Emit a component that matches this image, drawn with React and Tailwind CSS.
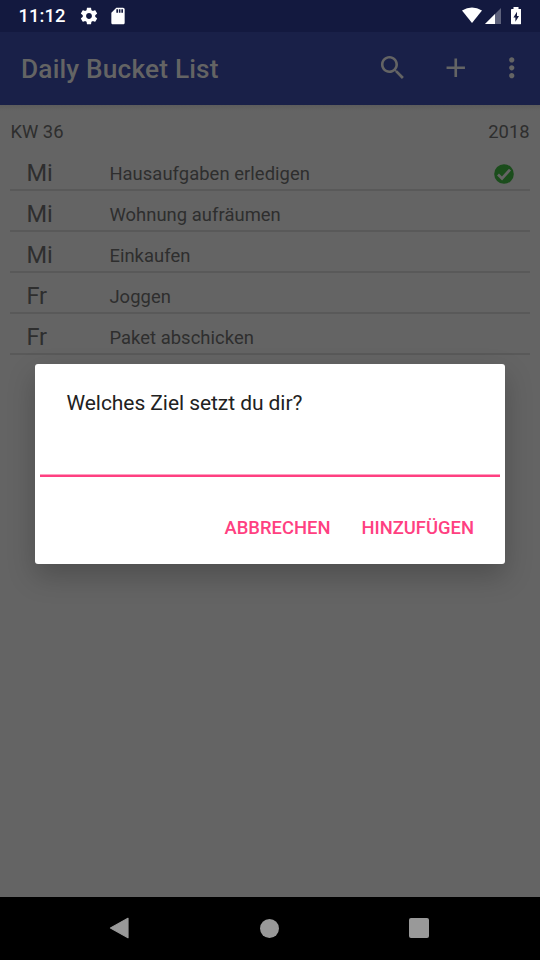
import React from "react";

const goals = [
  { day: "Mi", text: "Hausaufgaben erledigen", done: true },
  { day: "Mi", text: "Wohnung aufräumen" },
  { day: "Mi", text: "Einkaufen" },
  { day: "Fr", text: "Joggen" },
  { day: "Fr", text: "Paket abschicken" },
];

function Icon({ d, className }) {
  return (
    <svg viewBox="0 0 24 24" fill="currentColor" className={className}>
      <path d={d} />
    </svg>
  );
}

const paths = {
  gear: "M19.43 12.98c.04-.32.07-.64.07-.98s-.03-.66-.07-.98l2.11-1.65c.19-.15.24-.42.12-.64l-2-3.46c-.12-.22-.39-.3-.61-.22l-2.49 1c-.52-.4-1.08-.73-1.69-.98l-.38-2.65C14.46 2.18 14.25 2 14 2h-4c-.25 0-.46.18-.49.42l-.38 2.65c-.61.25-1.17.59-1.69.98l-2.49-1c-.23-.09-.49 0-.61.22l-2 3.46c-.13.22-.07.49.12.64l2.11 1.65c-.04.32-.07.65-.07.98s.03.66.07.98l-2.11 1.65c-.19.15-.24.42-.12.64l2 3.46c.12.22.39.3.61.22l2.49-1c.52.4 1.08.73 1.69.98l.38 2.65c.03.24.24.42.49.42h4c.25 0 .46-.18.49-.42l.38-2.65c.61-.25 1.17-.59 1.69-.98l2.49 1c.23.09.49 0 .61-.22l2-3.46c.12-.22.07-.49-.12-.64l-2.11-1.65zM12 15.5c-1.93 0-3.5-1.57-3.5-3.5s1.57-3.5 3.5-3.5 3.5 1.57 3.5 3.5-1.57 3.5-3.5 3.5z",
  sd: "M18 2h-8L4.02 8 4 20c0 1.1.9 2 2 2h12c1.1 0 2-.9 2-2V4c0-1.1-.9-2-2-2zm-6 6h-2V4h2v4zm3 0h-2V4h2v4zm3 0h-2V4h2v4z",
  search: "M15.5 14h-.79l-.28-.27C15.41 12.59 16 11.11 16 9.5 16 5.91 13.09 3 9.5 3S3 5.91 3 9.5 5.91 16 9.5 16c1.61 0 3.09-.59 4.23-1.57l.27.28v.79l5 4.99L20.49 19l-4.99-5zm-6 0C7.01 14 5 11.99 5 9.5S7.01 5 9.5 5 14 7.01 14 9.5 11.99 14 9.5 14z",
  plus: "M19 13h-6v6h-2v-6H5v-2h6V5h2v6h6v2z",
  more: "M12 8c1.1 0 2-.9 2-2s-.9-2-2-2-2 .9-2 2 .9 2 2 2zm0 2c-1.1 0-2 .9-2 2s.9 2 2 2 2-.9 2-2-.9-2-2-2zm0 6c-1.1 0-2 .9-2 2s.9 2 2 2 2-.9 2-2-.9-2-2-2z",
};

function StatusBar() {
  return (
    <div className="flex h-[31.5px] shrink-0 items-center bg-[#13193f] pl-[18.5px] pr-[19px] text-white">
      <span className="mt-px w-[47px] text-[18.4px] font-medium leading-none tracking-[0.1px]">11:12</span>
      <Icon d={paths.gear} className="ml-[13px] size-[20px]" />
      <Icon d={paths.sd} className="ml-[9.5px] size-[20px]" />
      <svg viewBox="0 0 60 18" className="ml-auto h-[18px] w-[60px]" fill="white">
        <path d="M1 3.6Q11 -2.4 21 3.6L11 16Z" />
        <path d="M40 1v16H24z" opacity="0.32" />
        <path d="M34 7v10H24z" />
        <path
          fillRule="evenodd"
          d="M52.5 0h5v2h2q.8 0 .8.8v13.6q0 .8-.8.8h-8.7q-.8 0-.8-.8V2.8q0-.8.8-.8h1.7zM56 4.8l-3.6 5.7h2v4.3l3.6-5.8h-2z"
        />
      </svg>
    </div>
  );
}

function AppBar() {
  return (
    <div className="flex h-[73.5px] shrink-0 items-center bg-[#192048] pl-[21px] pr-[13px] text-[#646464]">
      <h1 className="mt-[2px] text-[26.25px] font-medium leading-none tracking-[0.17px]">Daily Bucket List</h1>
      <Icon d={paths.search} className="-mt-px ml-auto size-[31.5px]" />
      <Icon d={paths.plus} className="-mt-px ml-[32px] size-[31.5px]" />
      <Icon d={paths.more} className="-mt-px ml-[24px] size-[31.5px]" />
    </div>
  );
}

function GoalRow({ goal }) {
  return (
    <li className="flex h-[41px] items-center border-b-2 border-[#595959] pl-[16px] pr-[15.5px]">
      <span className="mt-[9px] w-[83px] text-[23.6px] leading-none tracking-[-0.1px]">{goal.day}</span>
      <span className="mt-[10px] text-[18.4px] leading-none tracking-[0.05px]">{goal.text}</span>
      {goal.done && (
        <svg viewBox="0 0 20 20" className="ml-auto mt-[9px] size-[20px]">
          <circle cx="10" cy="10" r="9.8" fill="#1b4d1c" />
          <path d="M4 10.5l4 3.9 8-8.8" fill="none" stroke="#646464" strokeWidth="2.8" />
        </svg>
      )}
    </li>
  );
}

function Dialog() {
  return (
    <div className="absolute left-[35px] top-[364px] flex h-[200px] w-[470px] flex-col rounded-[3px] bg-white px-[5px] shadow-[0_12px_28px_rgba(0,0,0,0.22)]">
      <p className="ml-[26.5px] mt-[28px] text-[21px] leading-[22px] tracking-[-0.06px] text-[#212121]">Welches Ziel setzt du dir?</p>
      <input
        aria-label="Welches Ziel setzt du dir?"
        className="mt-[20px] h-[40px] w-full outline-none"
      />
      <div className="h-[3px] shrink-0 border-t border-[#ff9fc0] bg-[#ff4081]" />
      <div className="mt-[40px] flex justify-end gap-[31px] pr-[26px] text-[18.4px] font-medium leading-[22px] text-[#ff4081]">
        <button>ABBRECHEN</button>
        <button>HINZUFÜGEN</button>
      </div>
    </div>
  );
}

function NavBar() {
  return (
    <div className="flex h-[63px] shrink-0 items-center justify-between bg-black pb-px pl-[109px] pr-[111px]">
      <svg viewBox="0 0 20 22" className="h-[22px] w-[20px]">
        <path d="M1.5 11L19 1.3v19.4z" fill="#999" stroke="#999" strokeWidth="1.2" strokeLinejoin="round" />
      </svg>
      <div className="ml-[1px] size-[19px] rounded-full bg-[#999]" />
      <div className="size-[20px] rounded-[2px] bg-[#999]" />
    </div>
  );
}

export default function App() {
  return (
    <div className="relative flex h-[960px] w-[540px] flex-col overflow-hidden bg-[#646464] font-[Roboto,sans-serif] text-[#2e2e2e]">
      <StatusBar />
      <AppBar />
      <main className="flex-1 bg-[linear-gradient(#5c5c5c,#646464_6px)] px-[10.4px]">
        <div className="flex h-[45px] items-center justify-between pt-[9px] text-[18.4px] leading-none">
          <span>KW 36</span>
          <span>2018</span>
        </div>
        <ul>
          {goals.map((goal) => (
            <GoalRow key={goal.text} goal={goal} />
          ))}
        </ul>
      </main>
      <NavBar />
      <Dialog />
    </div>
  );
}
